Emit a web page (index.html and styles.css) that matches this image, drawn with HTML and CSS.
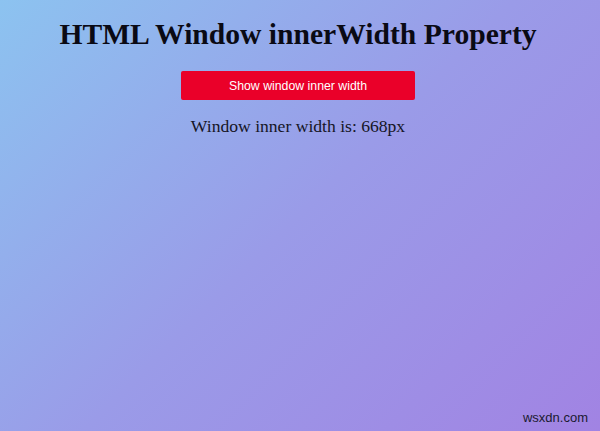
FILE: index.html
```html
<!DOCTYPE html>
<html>
<head>
<meta charset="utf-8">
<link rel="stylesheet" href="styles.css">
</head>
<body>
<div class="page">
  <h1 class="title">HTML Window innerWidth Property</h1>
  <button class="btn">Show window inner width</button>
  <p class="result">Window inner width is: 668px</p>
  <div class="spacer"></div>
  <div class="mark">wsxdn.com</div>
</div>
</body>
</html>
```

FILE: styles.css
```css
html, body {
  margin: 0;
  padding: 0;
  height: 100%;
}
body {
  background: linear-gradient(135deg, #8cc3f0 0%, #9a9be8 50%, #a183e3 100%);
  font-family: "Liberation Serif", "Times New Roman", serif;
  color: #111;
}
.page {
  height: 431px;
  display: flex;
  flex-direction: column;
  align-items: center;
  box-sizing: border-box;
  padding: 16px 4px 0 0;
}
.title {
  margin: 0;
  font-size: 29.6px;
  font-weight: bold;
  line-height: 36px;
  color: #0a0a14;
}
.btn {
  margin-top: 19px;
  width: 234px;
  height: 29px;
  background: #ea0029;
  color: #fff;
  border: none;
  border-radius: 2px;
  font-family: "Liberation Sans", Arial, sans-serif;
  font-size: 12.3px;
  cursor: pointer;
}
.result {
  margin: 14px 0 0;
  font-size: 17.6px;
  line-height: 24px;
  color: #151525;
}
.spacer {
  flex: 1;
}
.mark {
  align-self: flex-end;
  margin: 0 8px 5px 0;
  font-family: "Liberation Sans", Arial, sans-serif;
  font-size: 13px;
  line-height: 16px;
  color: #1a1a30;
}
```
